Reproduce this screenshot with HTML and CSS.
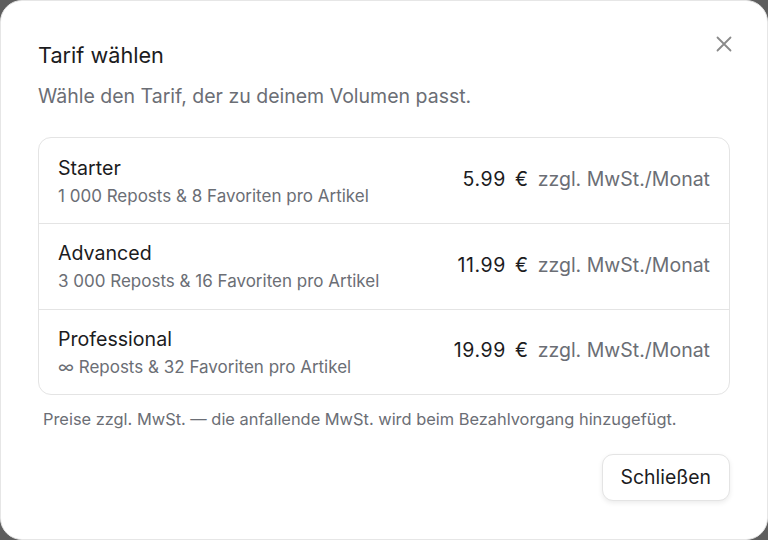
FILE: index.html
```html
<!DOCTYPE html>
<html lang="de">
<head>
<meta charset="utf-8">
<title>Tarif wählen</title>
<link rel="stylesheet" href="styles.css">
</head>
<body>
<div class="dialog">
  <button class="close" aria-label="Schließen">
    <svg width="16" height="16" viewBox="0 0 16 16"><path d="M1.5 1.5 L14.5 14.5 M14.5 1.5 L1.5 14.5" stroke="#8a8a8a" stroke-width="1.8" fill="none" stroke-linecap="round"/></svg>
  </button>
  <h1 class="title">Tarif wählen</h1>
  <p class="subtitle">Wähle den Tarif, der zu deinem Volumen passt.</p>
  <div class="plans">
    <div class="plan">
      <div class="info">
        <div class="name">Starter</div>
        <div class="desc">1 000 Reposts &amp; 8 Favoriten pro Artikel</div>
      </div>
      <div class="price"><span class="amount">5.99 €</span><span class="suffix">zzgl. MwSt./Monat</span></div>
    </div>
    <div class="plan">
      <div class="info">
        <div class="name">Advanced</div>
        <div class="desc">3 000 Reposts &amp; 16 Favoriten pro Artikel</div>
      </div>
      <div class="price"><span class="amount">11.99 €</span><span class="suffix">zzgl. MwSt./Monat</span></div>
    </div>
    <div class="plan">
      <div class="info">
        <div class="name">Professional</div>
        <div class="desc">∞ Reposts &amp; 32 Favoriten pro Artikel</div>
      </div>
      <div class="price"><span class="amount">19.99 €</span><span class="suffix">zzgl. MwSt./Monat</span></div>
    </div>
  </div>
  <p class="note">Preise zzgl. MwSt. — die anfallende MwSt. wird beim Bezahlvorgang hinzugefügt.</p>
  <div class="actions">
    <button class="btn">Schließen</button>
  </div>
</div>
</body>
</html>
```
FILE: styles.css
```css
* { box-sizing: border-box; }
html, body { margin: 0; padding: 0; }
body {
  width: 768px;
  height: 540px;
  background: #5e5e5e;
  font-family: Inter, "Noto Sans", sans-serif;
  overflow: hidden;
}
.dialog {
  position: relative;
  width: 768px;
  height: 540px;
  background: #fff;
  border-radius: 22px;
  border: 1px solid #e6e6e6;
  padding: 38px 37px 0 37px;
}
.close {
  position: absolute;
  top: 35px;
  right: 35px;
  width: 16px;
  height: 16px;
  padding: 0;
  border: 0;
  background: none;
  display: flex;
}
.title {
  margin: 0;
  font-size: 21.7px;
  font-weight: 400;
  color: #1c1c1e;
  line-height: 32px;
}
.subtitle {
  margin: 11px 0 0;
  font-size: 19.5px;
  color: #6b6e75;
  line-height: 28px;
}
.plans {
  margin-top: 27px;
  border: 1px solid #e4e4e4;
  border-radius: 13px;
}
.plan {
  display: flex;
  align-items: center;
  justify-content: space-between;
  height: 85.3px;
  padding: 0 19px;
  border-top: 1px solid #e4e4e4;
}
.plan:first-child { border-top: 0; }
.name {
  font-size: 19.6px;
  color: #1c1c1e;
  line-height: 26px;
}
.desc {
  margin-top: 4px;
  font-size: 17px;
  color: #6b6e75;
  line-height: 22px;
}
.price {
  display: flex;
  align-items: baseline;
  gap: 9px;
  font-size: 19.5px;
  margin-top: -3px;
}
.amount {
  color: #1c1c1e;
  letter-spacing: 0.6px;
  word-spacing: 3px;
}
.suffix { color: #6b6e75; }
.note {
  margin: 13px 0 0 5px;
  font-size: 16.4px;
  color: #6b6e75;
  line-height: 22px;
}
.actions {
  display: flex;
  justify-content: flex-end;
  margin-top: 24px;
}
.btn {
  font-family: inherit;
  font-size: 19.4px;
  color: #1c1c1e;
  background: #fff;
  border: 1px solid #e4e4e4;
  border-radius: 11px;
  height: 47px;
  padding: 0 18px;
  box-shadow: 0 2px 5px rgba(0,0,0,0.08);
}
```
